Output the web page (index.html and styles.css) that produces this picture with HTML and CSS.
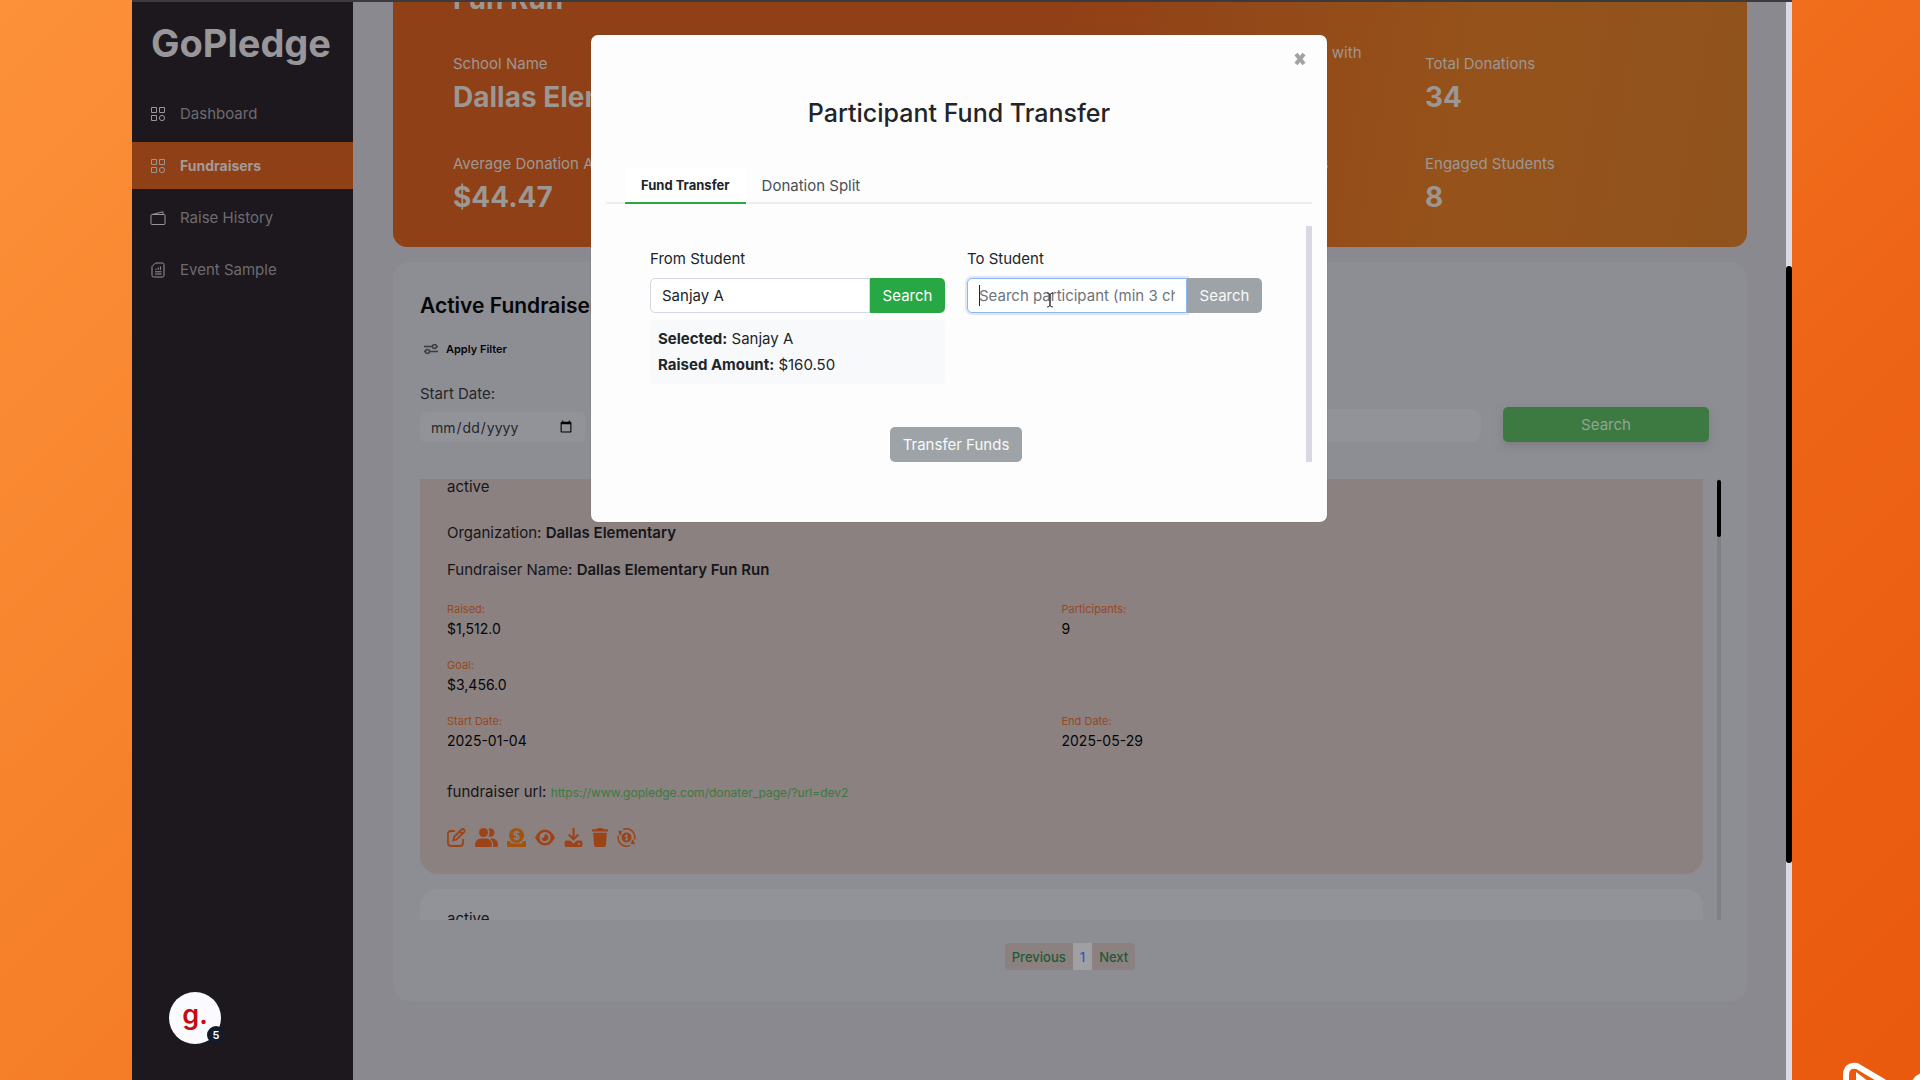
FILE: index.html
```html
<!DOCTYPE html>
<html lang="en">
<head>
  <meta charset="UTF-8">
  <meta name="viewport" content="width=device-width, initial-scale=1.0">
  <title>GoPledge - Fundraisers</title>
  <link rel="stylesheet" href="styles.css">
</head>
<body>
  <div class="app">
    <nav class="sidebar">
      <div class="logo">GoPledge</div>
      <a href="#" class="nav-item">
        <svg viewBox="0 0 14 14"><path d="M.5.5h5v5h-5zM8.500.5h5v5h-5zM.5 8.500h5v5h-5z"/><circle cx="11" cy="11" r="2.600"/></svg>
        Dashboard
      </a>
      <a href="#" class="nav-item active">
        <svg viewBox="0 0 14 14"><path d="M.5.5h5v5h-5zM8.500.5h5v5h-5zM.5 8.500h5v5h-5z"/><circle cx="11" cy="11" r="2.600"/></svg>
        Fundraisers
      </a>
      <a href="#" class="nav-item">
        <svg viewBox="0 0 14 14"><rect x="0" y="3.500" width="14" height="10" rx="1"/><path d="M1 3.500L12 .8v2.700"/></svg>
        Raise History
      </a>
      <a href="#" class="nav-item">
        <svg viewBox="0 0 14 14"><path d="M4.500 0h7a1.500 1.500 0 0 1 1.500 1.500v11a1.500 1.500 0 0 1-1.500 1.500h-9A1.500 1.500 0 0 1 1 12.500V3.500zM4 8.800h6.500M4 11h6.500M5 6.800V5.500M7.200 6.800V4.500M9.400 6.800V3.500"/></svg>
        Event Sample
      </a>
      <button class="chat" aria-label="Open chat">g.<span class="chat-count">5</span></button>
    </nav>

    <main class="content">
      <section class="summary">
        <h2>Fun Run</h2>
        <div class="stats">
          <div class="stat"><span>School Name</span><strong>Dallas Elementary</strong></div>
          <div class="stat"><span>Total Raised</span><strong>$1,512.0</strong></div>
          <div class="stat"><span>Total number of the participants with donations</span><strong>8</strong></div>
          <div class="stat"><span>Total Donations</span><strong>34</strong></div>
          <div class="stat"><span>Average Donation Amount</span><strong>$44.47</strong></div>
          <div class="stat"><span>Participants</span><strong>9</strong></div>
          <div class="stat"><span>Total number of Active Students</span><strong>9</strong></div>
          <div class="stat"><span>Engaged Students</span><strong>8</strong></div>
        </div>
      </section>

      <section class="panel">
        <h1>Active Fundraisers</h1>
        <button class="filter">
          <svg viewBox="0 0 14 10"><path d="M0 2.500h8M13 2.500h1M0 7.500h1M6 7.500h8"/><circle cx="10.500" cy="2.500" r="2"/><circle cx="3.500" cy="7.500" r="2"/></svg>
          Apply Filter
        </button>
        <form class="filters">
          <div class="field-date">
            <label for="start">Start Date:</label>
            <input type="date" id="start">
          </div>
          <input type="text" class="keyword" aria-label="Keyword">
          <button type="button" class="btn-search">Search</button>
        </form>

        <div class="list-wrap">
          <div class="list">
            <article class="item">
              <p class="status">active</p>
              <p class="line">Organization: <b>Dallas Elementary</b></p>
              <p class="line">Fundraiser Name: <b>Dallas Elementary Fun Run</b></p>
              <dl class="facts">
                <div><dt>Raised:</dt><dd>$1,512.0</dd></div>
                <div><dt>Participants:</dt><dd>9</dd></div>
                <div class="wide"><dt>Goal:</dt><dd>$3,456.0</dd></div>
                <div><dt>Start Date:</dt><dd>2025-01-04</dd></div>
                <div><dt>End Date:</dt><dd>2025-05-29</dd></div>
              </dl>
              <p class="url">fundraiser url: <a href="#">https://www.gopledge.com/donater_page/?url=dev2</a></p>
              <div class="actions">
                <button aria-label="Edit"><svg width="19" height="19" viewBox="0 0 19 19"><path class="stroke" d="M8 3H4a3 3 0 0 0-3 3v9a3 3 0 0 0 3 3h9a3 3 0 0 0 3-3v-4M7 9l7.500-7.500q1.500-1 2.600.2 1 1.200 0 2.500L9.500 11.500l-3.200.9zM13 3.500l2.500 2.500"/></svg></button>
                <button aria-label="Participants"><svg width="23" height="19" viewBox="0 0 23 19"><circle cx="8.500" cy="4.500" r="4.500"/><path d="M0 18q0-7.500 6-7.500h5q6 0 6 7.500 0 1-1 1H1q-1 0-1-1zM13.500.8a4.200 4.200 0 1 1 0 7.600q2.200-3.800 0-7.600zM15 10.500h3q5 .5 5 7 0 1.500-1 1.500h-4q.8-5-3-8.500z"/></svg></button>
                <button aria-label="Donate" class="amber"><svg width="19" height="19" viewBox="0 0 19 19"><path d="M0 13h3l1.500 2.500h10L16 13h3v5q0 1-1 1H1q-1 0-1-1z"/><circle cx="9.500" cy="7.500" r="7.500"/><path class="cut" d="M12 5q-.5-1.200-2.500-1.200T7 5.300q0 1.400 2.500 2T12 9.400q0 1.600-2.500 1.600T7 9.700M9.500 2.500v10"/></svg></button>
                <button aria-label="View"><svg width="20" height="19" viewBox="0 0 20 19"><path fill-rule="evenodd" d="M0 9.500Q4 1.500 10 1.500t10 8q-4 8-10 8t-10-8zM10 4a5.500 5.500 0 1 0 0 11 5.500 5.500 0 0 0 0-11zM9.800 6.200a3.400 3.400 0 1 1-3.200 3.700q2.800.8 3.200-3.700z"/></svg></button>
                <button aria-label="Download"><svg width="19" height="19" viewBox="0 0 18 19"><path d="M7.900 0h2.200v8.700l3-3 1.500 1.500L9 12.800 3.400 7.200l1.500-1.500 3 3z"/><path fill-rule="evenodd" d="M2 12.500h3.500L9 15.500l3.500-3H16q2 0 2 2V17q0 2-2 2H2q-2 0-2-2v-2.500q0-2 2-2zM14.500 15a1 1 0 1 0 0 2 1 1 0 0 0 0-2z"/></svg></button>
                <button aria-label="Delete"><svg width="16" height="19" viewBox="0 0 16 19"><path d="M0 1.200h4.500L5.300 0h5.400l.8 1.200H16v2.300H0zM1.200 4.800h13.600L14 17.300Q13.900 19 12 19H4q-1.900 0-2-1.700z"/></svg></button>
                <button aria-label="Transfer funds"><svg width="19" height="19" viewBox="0 0 19 19"><path class="stroke ring" d="M6 1.600A8.300 8.300 0 0 1 17.500 11.500M13 17.400A8.300 8.300 0 0 1 1.500 7.500M3.200 3.800l.5 3M15.800 15.200l-.5-3"/><path d="M1 2.500l4.500.7L3 7.500zM18 16.500l-4.500-.7L16 11.500z"/><circle cx="9.500" cy="9.500" r="5"/><path class="cut thin" d="M11 8q-.3-.8-1.500-.8T8 8.200q0 .9 1.500 1.300T11 10.700q0 1-1.500 1T8 11M9.500 6.200v6.600"/></svg></button>
              </div>
            </article>
            <article class="item plain">
              <p class="status">active</p>
            </article>
          </div>
          <div class="list-scroll"><i></i></div>
        </div>

        <div class="pager">
          <button>Previous</button>
          <button class="current">1</button>
          <button>Next</button>
        </div>
      </section>
    </main>
    <div class="page-scroll"><i></i></div>

    <div class="overlay">
      <div class="modal" role="dialog" aria-labelledby="modal-title">
        <button class="close" aria-label="Close"><svg viewBox="0 0 16 16"><path d="M4 3l8 10M12 3L4 13"/></svg></button>
        <h2 id="modal-title">Participant Fund Transfer</h2>
        <div class="tabs">
          <button class="tab selected">Fund Transfer</button>
          <button class="tab">Donation Split</button>
        </div>
        <div class="modal-body">
          <div class="transfer">
            <div class="student">
              <label for="from">From Student</label>
              <div class="group">
                <input type="text" id="from" value="Sanjay A">
                <button class="go">Search</button>
              </div>
              <div class="picked">
                <p><b>Selected:</b> Sanjay A</p>
                <p><b>Raised Amount:</b> $160.50</p>
              </div>
            </div>
            <div class="student">
              <label for="to">To Student</label>
              <div class="group">
                <input type="text" id="to" class="focused" placeholder="Search participant (min 3 characters)">
                <button class="off">Search</button>
                <span class="caret"></span>
                <svg class="ibeam" viewBox="0 0 8 16"><path d="M1 1q3 0 3 2v10q0 2-3 2M7 1q-3 0-3 2v10q0 2 3 2"/></svg>
              </div>
            </div>
          </div>
          <button class="off transfer-btn">Transfer Funds</button>
          <div class="modal-scroll"></div>
        </div>
      </div>
    </div>
  </div>
  <svg class="brand-mark" viewBox="0 0 80 20"><path d="M6 24V16Q6 4 17 6L44 22M19 24v-6l8 6M74 24q2-6 8-8"/></svg>
</body>
</html>
```
FILE: styles.css
```css
* {
  box-sizing: border-box;
}
body {
  margin: 0;
  height: 100vh;
  padding: 0 128px 0 132px;
  overflow: hidden;
  position: relative;
  background: linear-gradient(135deg, #fc9139 0%, #f47a25 45%, #ee6517 72%, #e9590e 100%);
  font-family: Inter, "Open Sans", sans-serif;
  font-size: 15px;
  color: #16161a;
}
h1, h2, p, dl, dd {
  margin: 0;
}
button, input {
  font: inherit;
}
button {
  border: none;
  padding: 0;
  background: none;
  cursor: pointer;
}
svg {
  fill: none;
  stroke: currentColor;
}
.app {
  position: relative;
  display: flex;
  height: 100vh;
  border-top: 2px solid #3b3b3d;
  background: #8a898f;
  overflow: hidden;
}

/* sidebar */
.sidebar {
  position: relative;
  flex: 0 0 221px;
  display: flex;
  flex-direction: column;
  gap: 5px;
  background: #1c181e;
}
.logo {
  height: 83px;
  padding: 17px 0 0 19px;
  font-size: 38px;
  line-height: 48px;
  font-weight: 700;
  color: #989698;
}
.nav-item {
  display: flex;
  align-items: center;
  gap: 15px;
  height: 47px;
  padding-left: 19px;
  color: #6e6b70;
  text-decoration: none;
}
.nav-item svg {
  width: 14px;
  height: 14px;
  color: #989698;
  overflow: visible;
}
.nav-item.active {
  background: #904016;
  color: #a29a97;
  font-size: 14px;
  font-weight: 700;
}
.chat {
  position: absolute;
  left: 37px;
  bottom: 36px;
  width: 52px;
  height: 52px;
  padding-bottom: 6px;
  border-radius: 50%;
  background: #fbfafe;
  color: #c40d0d;
  font-size: 27px;
  line-height: 40px;
  font-weight: 600;
}
.chat-count {
  position: absolute;
  right: -4px;
  bottom: 0;
  width: 18px;
  height: 18px;
  border-radius: 50%;
  background: #111b2b;
  color: #fff;
  font-size: 11px;
  line-height: 18px;
}

/* page */
.content {
  flex: 1;
  min-width: 0;
  padding: 0 39px 0 40px;
}
.summary {
  height: 275px;
  margin-top: -30px;
  padding: 11px 60px 0;
  border-radius: 0 0 14px 14px;
  background: linear-gradient(100deg, #904016 0%, #904016 48%, #96521b 78%, #90531d 100%);
  color: #9c9793;
}
.summary h2 {
  font-size: 28px;
  line-height: 32px;
}
.stats {
  display: grid;
  grid-template-columns: repeat(4, 324px);
  grid-template-rows: 100px 100px;
  align-items: center;
  padding-top: 21px;
}
.stat span {
  display: block;
  max-width: 280px;
  line-height: 22px;
}
.stat strong {
  display: block;
  font-size: 28px;
  line-height: 44px;
}
.panel {
  margin-top: 15px;
  height: 739px;
  padding: 26px 27px 0;
  border-radius: 16px;
  background: #8d8e93;
}
.panel h1 {
  font-size: 21px;
  line-height: 36px;
  font-weight: 600;
  color: #060608;
}
.filter {
  display: flex;
  align-items: center;
  gap: 8px;
  height: 24px;
  margin-top: 13px;
  padding-left: 4px;
  font-size: 11px;
  font-weight: 600;
  color: #060608;
}
.filter svg {
  width: 14px;
  height: 10px;
  color: #3b3b40;
  stroke-width: 1.5;
}
.filters {
  display: flex;
  align-items: flex-end;
  margin-top: 21px;
}
.filters label {
  display: block;
  line-height: 24px;
  margin-bottom: 6px;
  color: #26262a;
}
.filters input {
  border: none;
  background: #929398;
  color: #26262a;
}
.field-date input {
  width: 165px;
  height: 30px;
  padding: 0 10px;
  border-radius: 5px;
  font-size: 14px;
}
.keyword {
  flex: 1;
  height: 33px;
  margin-left: 150px;
  border-radius: 10px;
}
.btn-search {
  width: 206px;
  height: 35px;
  margin: 0 11px 0 22px;
  border-radius: 5px;
  background: #3c7a42;
  box-shadow: 0 4px 8px #7d7e83;
  color: #93a394;
}
.list-wrap {
  position: relative;
  height: 441px;
  margin-top: 37px;
}
.list {
  height: 441px;
  margin-right: 17px;
  overflow: hidden;
}
.item {
  height: 425px;
  margin-top: -30px;
  padding: 25px 27px 0;
  border-radius: 18px;
  background: #8b8180;
}
.item.plain {
  margin-top: 15px;
  padding-top: 17px;
  background: #929398;
}
.status {
  line-height: 26px;
}
.line {
  line-height: 24px;
  margin-top: 13px;
}
.status + .line {
  margin-top: 21px;
}
.line b {
  font-weight: 600;
}
.facts {
  display: grid;
  grid-template-columns: 1fr 1fr;
  row-gap: 16px;
  margin-top: 19px;
}
.facts .wide {
  grid-column: span 2;
}
.facts dt {
  font-size: 11px;
  line-height: 16px;
  color: #98471f;
}
.facts dd {
  font-size: 14px;
  line-height: 24px;
  color: #060608;
}
.url {
  margin-top: 27px;
  line-height: 24px;
}
.url a {
  font-size: 12px;
  color: #3c7a42;
  text-decoration: none;
}
.actions {
  display: flex;
  gap: 9px;
  height: 19px;
  margin-top: 23px;
  color: #9c4418;
}
.actions svg {
  display: block;
  fill: currentColor;
  stroke: none;
}
.actions .amber {
  color: #a2530f;
}
.actions button {
  color: inherit;
}
.actions .stroke {
  fill: none;
  stroke: currentColor;
  stroke-width: 1.8;
}
.actions .ring {
  stroke-width: 1.5;
}
.actions .cut {
  fill: none;
  stroke: #8b8180;
  stroke-width: 1.4;
}
.actions .thin {
  stroke-width: 1;
}
.list-scroll {
  position: absolute;
  top: 0;
  right: -1px;
  width: 4px;
  height: 100%;
  border-radius: 2px;
  background: #7f7f84;
}
.list-scroll i {
  display: block;
  height: 57px;
  margin-top: 1px;
  border-radius: 2px;
  background: #000;
}
.pager {
  display: flex;
  width: max-content;
  margin: 23px auto 0;
  border-radius: 4px;
  overflow: hidden;
}
.pager button {
  height: 27px;
  padding: 0 7px;
  background: #8b8180;
  color: #1f5a38;
  font-size: 13px;
  font-weight: 500;
}
.pager .current {
  background: #a09fa3;
  color: #3059b8;
}
.page-scroll {
  flex: 0 0 6px;
  background: #dad9e5;
}
.page-scroll i {
  display: block;
  height: 597px;
  margin-top: 264px;
  border-radius: 3px;
  background: #000;
}

/* modal */
.overlay {
  position: absolute;
  inset: 0;
  display: flex;
  justify-content: center;
  align-items: flex-start;
  padding-top: 33px;
  padding-right: 6px;
}
.modal {
  position: relative;
  width: 736px;
  height: 487px;
  padding: 56px 15px 0;
  border-radius: 7px;
  background: #fdfdfd;
  box-shadow: 0 0 1px #55504f;
  color: #212529;
}
.close {
  position: absolute;
  top: 16px;
  right: 19px;
  width: 16px;
  height: 16px;
  color: #a3a3a3;
}
.close svg {
  display: block;
  stroke-width: 4;
}
.modal h2 {
  text-align: center;
  font-size: 25px;
  line-height: 44px;
  font-weight: 500;
}
.tabs {
  display: flex;
  height: 37px;
  margin-top: 32px;
  padding-left: 19px;
  box-shadow: inset 0 -2px #eeeeef;
}
.tab {
  padding: 0 16px;
  color: #495057;
}
.tab.selected {
  background: #fff;
  border-bottom: 2px solid #28a745;
  color: #212529;
  font-size: 13px;
  font-weight: 700;
}
.modal-body {
  position: relative;
  height: 236px;
  margin-top: 22px;
  padding: 21px 50px 0 44px;
}
.transfer {
  display: flex;
  gap: 22px;
  height: 180px;
}
.student {
  flex: 1;
  min-width: 0;
}
.student label {
  display: block;
  line-height: 24px;
}
.group {
  position: relative;
  display: flex;
  height: 35px;
  margin-top: 7px;
}
.group input {
  flex: 1;
  min-width: 0;
  padding: 0 11px;
  border: 1px solid #d3d7df;
  border-radius: 5px 0 0 5px;
  background: #fff;
  color: #212529;
}
.group input.focused {
  border-color: #8cb8ee;
  box-shadow: 0 0 0 2px #dce8fa;
}
.group input::placeholder {
  color: #6c757d;
}
.group button {
  width: 75px;
  border-radius: 0 5px 5px 0;
}
.go {
  background: #28a745;
  color: #fff;
}
.off {
  background: #9ea3a7;
  color: #f8f9fa;
}
.caret {
  position: absolute;
  left: 12px;
  top: 7px;
  width: 1px;
  height: 21px;
  background: #212529;
}
.ibeam {
  position: absolute;
  left: 79px;
  top: 14px;
  width: 8px;
  height: 16px;
  color: #333;
}
.picked {
  margin-top: 7px;
  padding: 6px 8px;
  border-radius: 4px;
  background: #f8f9fb;
}
.picked p {
  line-height: 26px;
}
.transfer-btn {
  display: block;
  width: 132px;
  height: 35px;
  margin: 0 auto;
  border-radius: 5px;
}
.modal-scroll {
  position: absolute;
  top: 0;
  right: 0;
  width: 6px;
  height: 236px;
  background: #d8d8e2;
}

.brand-mark {
  position: absolute;
  right: 0;
  bottom: 0;
  width: 80px;
  height: 20px;
  color: #fff;
  stroke-width: 6;
}
```
